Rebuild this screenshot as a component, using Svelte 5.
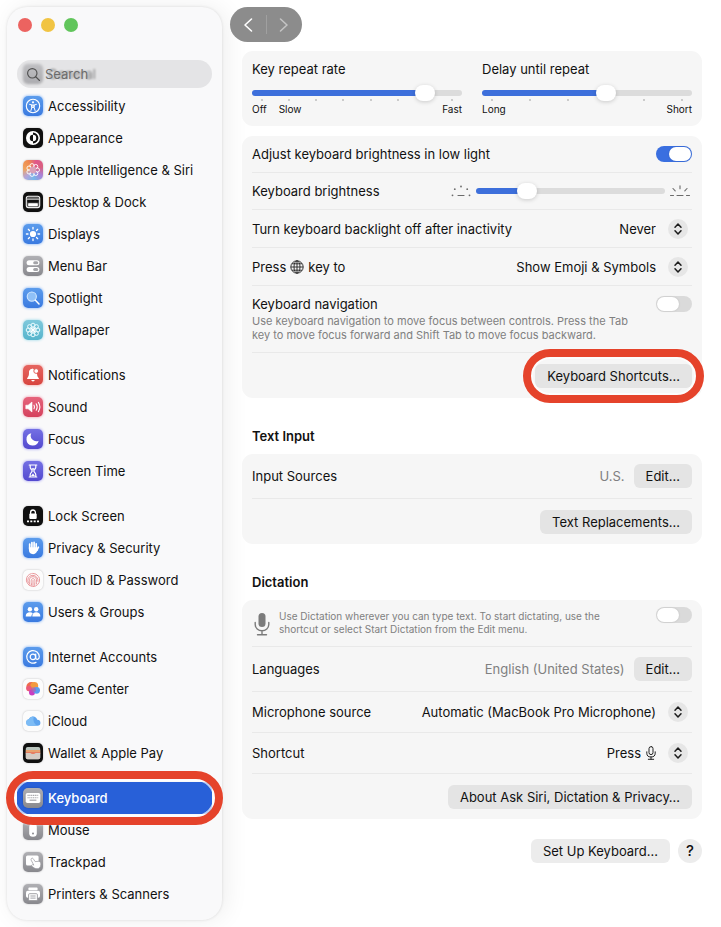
<script>
  const white = 'fill="none" stroke="#fff" stroke-linecap="round" stroke-linejoin="round"';

  const ring = (n, cx, cy, dist, r, attrs) =>
    Array.from({ length: n }, (_, i) => {
      const a = (i / n) * Math.PI * 2;
      return `<circle cx="${cx + Math.cos(a) * dist}" cy="${cy + Math.sin(a) * dist}" r="${r}" ${attrs}/>`;
    }).join('');

  const rays = (n, from, to, attrs) =>
    Array.from({ length: n }, (_, i) => {
      const a = (i / n) * Math.PI * 2;
      const c = Math.cos(a), s = Math.sin(a);
      return `<line x1="${10 + c * from}" y1="${10 + s * from}" x2="${10 + c * to}" y2="${10 + s * to}" ${attrs}/>`;
    }).join('');

  const groups = [
    [
      { name: 'Accessibility', tone: 'blue', art: `<circle cx="10" cy="10" r="6.7" ${white} stroke-width="1.1"/><circle cx="10" cy="6.3" r="1.1" fill="#fff"/><path d="M6.6 8.4 9 9v2.2l-1.1 3.3M13.4 8.4 11 9v2.2l1.1 3.3M9 9h2v2.4H9z" ${white} stroke-width="1"/>` },
      { name: 'Appearance', tone: 'black', art: `<circle cx="10" cy="10" r="6.2" ${white} stroke-width="1.6"/><path d="M10 3.8a6.2 6.2 0 0 0 0 12.4v-3a3.2 3.2 0 0 1 0-6.4z" fill="#fff"/><path d="M10 6.8a3.2 3.2 0 0 1 0 6.4z" fill="#fff"/>` },
      { name: 'Apple Intelligence & Siri', tone: 'siri', art: ring(7, 10, 10, 4.4, 2.1, 'fill="none" stroke="#fff" stroke-width=".9"') + '<circle cx="10" cy="10" r="3.4" fill="#d9a0b8"/>' },
      { name: 'Desktop & Dock', tone: 'black', art: `<rect x="3.3" y="4.2" width="13.4" height="11.4" rx="2" fill="#555" stroke="#eee" stroke-width="1.1"/><path d="M4 7.2h12" stroke="#ddd" stroke-width=".8"/><rect x="5.2" y="11.2" width="9.6" height="3" rx=".6" fill="#fff"/><rect x="4.4" y="8" width="11.2" height="2.6" fill="#111"/>` },
      { name: 'Displays', tone: 'blue', art: `<circle cx="10" cy="10" r="3.1" fill="#fff"/>${rays(8, 5, 6.6, 'stroke="#fff" stroke-width="1.3" stroke-linecap="round"')}` },
      { name: 'Menu Bar', tone: 'gray', art: `<rect x="3.6" y="4.2" width="12.8" height="5" rx="2.5" fill="#fff"/><rect x="10.2" y="5.2" width="5" height="3" rx="1.5" fill="#a4a4a8"/><rect x="3.6" y="10.9" width="12.8" height="5" rx="2.5" fill="#fff"/><rect x="10.2" y="11.9" width="5" height="3" rx="1.5" fill="#a4a4a8"/>` },
      { name: 'Spotlight', tone: 'blue', art: `<circle cx="8.8" cy="8.6" r="4.6" fill="#8fc0f7" stroke="#cfe6ff" stroke-width="1.1"/><path d="m12.4 12.2 3.6 3.7" ${white} stroke-width="1.5"/>` },
      { name: 'Wallpaper', tone: 'teal', art: `${ring(8, 10, 10, 4.8, 2, 'fill="none" stroke="#e9fbff" stroke-width="1"')}${rays(8, 1.2, 3.2, 'stroke="#fff" stroke-width="1" stroke-linecap="round"')}<circle cx="10" cy="10" r="1.6" fill="#fff"/>` }
    ],
    [
      { name: 'Notifications', tone: 'red', art: `<path d="M10 3.8c-2.7 0-4 1.9-4 4.3 0 2.9-.7 3.7-1.7 4.8-.4.5-.2 1 .4 1h10.6c.6 0 .8-.5.4-1-.9-1-1.5-1.8-1.6-3.7" fill="#fff"/><path d="M6 8c0-3 1.600-4.200 4-4.200l4 5.500v4H6z" fill="#fff"/><path d="M8.300 15h3.400a1.700 1.500 0 0 1-3.400 0z" fill="#fff"/><circle cx="13.200" cy="6" r="2.400" fill="#fff" stroke="#de524c" stroke-width=".9"/>` },
      { name: 'Sound', tone: 'rose', art: `<path d="M2.800 8.200h2.300L9 5v10l-3.900-3.200H2.800z" fill="#fff" stroke="#fff" stroke-width=".6" stroke-linejoin="round"/><path d="M11 8.200q1 1.800 0 3.600M13.200 6.800q2 3.200 0 6.400M15.400 5.400q3 4.600 0 9.200" ${white} stroke-width="1.100"/>` },
      { name: 'Focus', tone: 'indigo', art: '<path d="M8.300 4.200a5.600 5.600 0 0 0 7.400 7.500A6.200 6.200 0 1 1 8.300 4.200z" fill="#fff"/>' },
      { name: 'Screen Time', tone: 'indigo', art: `<path d="M6.200 4h7.600M6.200 16h7.600M7.200 4.400v1.800c0 1.900 2 2.700 2 3.800s-2 1.900-2 3.800v1.800M12.800 4.400v1.800c0 1.900-2 2.700-2 3.800s2 1.900 2 3.800v1.800" ${white} stroke-width="1.200"/><path d="M8.200 7.200h3.600L10 9.500zM7.800 15.200 10 12.500l2.200 2.700z" fill="#fff"/>` }
    ],
    [
      { name: 'Lock Screen', tone: 'black', art: `<path d="M7.600 8V6.400a2.400 2.400 0 0 1 4.800 0V8" ${white} stroke-width="1.300"/><rect x="6.300" y="7.400" width="7.400" height="5.600" rx="1" fill="#fff"/><path d="M4 15.400h2M7.300 15.400h2M10.700 15.400h2M14 15.400h2" stroke="#fff" stroke-width="1.900"/>` },
      { name: 'Privacy & Security', tone: 'blue', art: `<path d="M6.700 10.800V6.200M8.900 9.500V4.600M11.100 9.500V4.400M13.200 10V5.800M14 12.200l1.400-3" ${white} stroke-width="1.700"/><path d="M5.900 9.300H14l.8 2.300c-.8 2.700-2 4.700-4.600 4.700-2.900 0-4.300-1.900-4.300-4.700z" fill="#fff"/>` },
      { name: 'Touch ID & Password', tone: 'paper', art: `<g fill="none" stroke="#e78d92" stroke-width=".9" stroke-linecap="round"><circle cx="10" cy="10" r="6.600" stroke-dasharray="10 1 7 1"/><path d="M5.200 12.800a5.200 5.200 0 1 1 9.800-1.500M6.800 14.400c-1.600-5.200.3-7.700 3.200-7.700 3.400 0 4 3 3.400 7.200M8.700 15.300C7.600 11 8.200 8.600 10 8.600c2.200 0 2.200 3 1.500 6.700M10 10.500v5"/></g>` },
      { name: 'Users & Groups', tone: 'blue', art: `<circle cx="6.900" cy="7.300" r="2.200" fill="#fff"/><circle cx="13.200" cy="7.300" r="2.200" fill="#fff"/><path d="M2.700 14.500c0-2.800 1.700-4.200 4.200-4.200 1.200 0 2.200.4 2.900 1-.9.800-1.400 1.900-1.500 3.200zM9.300 14.500c0-2.800 1.500-4.200 3.900-4.200s4.200 1.400 4.200 4.200z" fill="#fff"/>` }
    ],
    [
      { name: 'Internet Accounts', tone: 'blue', art: `<circle cx="9.900" cy="9.900" r="2.700" ${white} stroke-width="1.200"/><path d="M12.700 7.200v3.600c0 2.400 3.600 2 3.600-1A6.300 6.300 0 1 0 13 15.400" ${white} stroke-width="1.200"/>` },
      { name: 'Game Center', tone: 'paper', art: '<circle cx="8.300" cy="8" r="5" fill="#ee6a4d"/><circle cx="11.300" cy="6.800" r="3.900" fill="#f39a3f"/><circle cx="6" cy="9.500" r="2.800" fill="#ec5a78"/><circle cx="9" cy="13.600" r="3" fill="#c93ec2"/><circle cx="13.600" cy="11.300" r="3.400" fill="#5a9df0"/><circle cx="10.400" cy="10.800" r="2.500" fill="#b060b0" opacity=".7"/>' },
      { name: 'iCloud', tone: 'paper', art: '<path d="M6.200 14.800a3.300 3.300 0 0 1-.5-6.500 4.600 4.600 0 0 1 8.600.5 3 3 0 0 1 .2 6z" fill="#5ea4ee"/><path d="M6.200 14.800a3.300 3.300 0 0 1-.5-6.500 4.600 4.600 0 0 1 5-2.600c-.9 4 .5 7.500 3.800 9.100z" fill="#7dbcf5"/>' },
      { name: 'Wallet & Apple Pay', tone: 'black', art: '<rect x="2.800" y="4" width="14.400" height="12.300" rx="1.800" fill="#b9c4bd"/><path d="M2.800 7h14.400v2.500H2.800z" fill="#e9a36f"/><path d="M2.800 9h14.400v2H2.800z" fill="#e77f62"/><path d="M2.800 10h4.700c.6 1.500 4.400 1.500 5 0h4.700v4.500a1.800 1.800 0 0 1-1.800 1.800H4.600a1.800 1.800 0 0 1-1.800-1.800z" fill="#d5cdc5"/>' }
    ],
    [
      { name: 'Keyboard', tone: 'gray', current: true, art: '<rect x="2.700" y="5" width="14.600" height="10" rx="1.700" fill="#fff"/><path d="M4.500 7.400h11M4.500 9.700h11" stroke="#a6a6aa" stroke-width="1.100" stroke-dasharray="1.200 .6"/><path d="M6.600 12.200h6.800" stroke="#a6a6aa" stroke-width="1.200"/>' },
      { name: 'Mouse', tone: 'gray', art: '<rect x="6.200" y="3.400" width="7.600" height="13.400" rx="3.600" fill="#fff"/><circle cx="10" cy="13.400" r="1" fill="#8b8b90"/>' },
      { name: 'Trackpad', tone: 'gray', art: '<rect x="3" y="3.600" width="12.600" height="9.800" rx="1.500" fill="#fff"/><path d="M8.300 6.600c.8-.9 1.700-.4 2.200.5l1.600 2.500 3.800-.3c1.500.2 1.900 1.700 1.900 3.200 0 2.500-1.400 4.200-3.700 4.200-2 0-3.300-.9-5.300-2.500-.7-.8.100-1.800 1-1.500l1 .4-2.600-4.900c-.3-.6-.2-1.200.1-1.600z" fill="#fff" stroke="#98989d" stroke-width=".7"/>' },
      { name: 'Printers & Scanners', tone: 'gray', art: '<rect x="5.400" y="3.600" width="9.200" height="2.600" rx=".8" fill="#fff"/><rect x="3" y="6.800" width="14" height="7" rx="1.700" fill="#fff"/><rect x="5.600" y="9.700" width="8.800" height="6.900" rx="1" fill="#fff" stroke="#98989d" stroke-width=".9"/><path d="M7.400 12h5.200M7.400 14.100h5.200" stroke="#98989d" stroke-width=".9"/>' }
    ]
  ];

  let rate = $state(6);
  let delay = $state(3);
  let brightness = $state(24);
  let lowLight = $state(true);
  let navigation = $state(false);
  let dictation = $state(false);
</script>

{#snippet row(item)}
  <a href="#pane" class="item" class:current={item.current} aria-current={item.current ? 'page' : undefined}>
    <span class="tile {item.tone}"><svg viewBox="0 0 20 20" aria-hidden="true">{@html item.art}</svg></span>
    <span>{item.name}</span>
  </a>
{/snippet}

{#snippet chevrons()}
  <span class="chevrons">
    <svg viewBox="0 0 20 20" aria-hidden="true"><path d="m7 8.200 3-3.200 3 3.200M7 11.800l3 3.200 3-3.200" fill="none" stroke="#1c1c1c" stroke-width="1.500" stroke-linecap="round" stroke-linejoin="round" /></svg>
  </span>
{/snippet}

<div class="window">
  <aside class="sidebar">
    <div class="lights">
      <button class="close" aria-label="Close"></button>
      <button class="minimize" aria-label="Minimize"></button>
      <button class="zoom" aria-label="Zoom"></button>
    </div>

    <div class="searcharea">
      <div class="under" aria-hidden="true"><span class="tile gray"></span><span>General</span></div>
      <label class="search">
        <svg viewBox="0 0 16 16" aria-hidden="true"><circle cx="6.700" cy="6.700" r="5" /><path d="m10.400 10.400 4 4" /></svg>
        <input type="search" aria-label="Search" placeholder="Search" />
      </label>
    </div>

    <nav>
      {#each groups as group}
        <div class="group">
          {#each group as item}
            {#if item.current}
              <div class="marked wide">{@render row(item)}</div>
            {:else}
              {@render row(item)}
            {/if}
          {/each}
        </div>
      {/each}
    </nav>
  </aside>

  <main id="pane">
    <div class="history">
      <button aria-label="Back"><svg viewBox="0 0 12 16"><path d="M9.500 2 3 8l6.500 6" /></svg></button>
      <button aria-label="Forward" disabled><svg viewBox="0 0 12 16"><path d="M2.500 2 9 8l-6.500 6" /></svg></button>
    </div>

    <section class="card pair">
      <div class="rate">
        <label for="rate">Key repeat rate</label>
        <input id="rate" type="range" min="0" max="7" bind:value={rate} style:--fill="{(rate / 7) * 100}%" />
        <div class="ticks">{#each Array(8) as _}<i></i>{/each}</div>
        <div class="scale"><span>Off</span><span>Slow</span><span class="end">Fast</span></div>
      </div>
      <div class="rate">
        <label for="delay">Delay until repeat</label>
        <input id="delay" type="range" min="0" max="5" bind:value={delay} style:--fill="{(delay / 5) * 100}%" />
        <div class="ticks">{#each Array(6) as _}<i></i>{/each}</div>
        <div class="scale"><span>Long</span><span class="end">Short</span></div>
      </div>
    </section>

    <section class="card">
      <div class="row">
        <label for="lowlight">Adjust keyboard brightness in low light</label>
        <input id="lowlight" class="switch" type="checkbox" bind:checked={lowLight} />
      </div>
      <div class="row">
        <label for="brightness">Keyboard brightness</label>
        <div class="dimmer">
          <svg viewBox="0 0 20 12" aria-hidden="true"><path d="M7 10.500h6" /><g fill="#6b6b6b" stroke="none"><circle cx="1.500" cy="10.300" r=".9" /><circle cx="18.500" cy="10.300" r=".9" /><circle cx="3.800" cy="4.200" r=".9" /><circle cx="16.200" cy="4.200" r=".9" /><circle cx="10" cy="1.500" r=".9" /></g></svg>
          <input id="brightness" type="range" min="0" max="100" bind:value={brightness} style:--fill="{brightness}%" />
          <svg viewBox="0 0 20 12" aria-hidden="true"><path d="M.5 10.500h3M7 10.500h6M16.500 10.500h3M10 .8v3M3 3.500l2.200 2.400M17 3.500l-2.200 2.400" /></svg>
        </div>
      </div>
      <div class="row tall">
        <label for="backlight">Turn keyboard backlight off after inactivity</label>
        <div class="picker"><select id="backlight"><option>Never</option></select>{@render chevrons()}</div>
      </div>
      <div class="row tall">
        <label for="globe" class="inline">Press
          <svg class="globe" viewBox="0 0 14 14" aria-label="Globe"><circle cx="7" cy="7" r="6.200" /><ellipse cx="7" cy="7" rx="3" ry="6.200" /><path d="M7 .8v12.400M.8 7h12.400M2 3.800h10M2 10.200h10" /></svg>
          key to</label>
        <div class="picker"><select id="globe"><option>Show Emoji &amp; Symbols</option></select>{@render chevrons()}</div>
      </div>
      <div class="row top navrow">
        <div>
          <label for="navigation">Keyboard navigation</label>
          <p>Use keyboard navigation to move focus between controls. Press the Tab key to move focus forward and Shift Tab to move focus backward.</p>
        </div>
        <input id="navigation" class="switch" type="checkbox" bind:checked={navigation} />
      </div>
      <div class="row action">
        <div class="marked"><button class="push">Keyboard Shortcuts…</button></div>
      </div>
    </section>

    <h2>Text Input</h2>
    <section class="card">
      <div class="row button-row">
        <span>Input Sources</span>
        <div class="value"><span>U.S.</span><button class="push">Edit…</button></div>
      </div>
      <div class="row action"><button class="push">Text Replacements…</button></div>
    </section>

    <h2>Dictation</h2>
    <section class="card">
      <div class="row top dictation">
        <svg class="mic" viewBox="0 0 16 24" aria-hidden="true"><rect x="4.500" y="1" width="7" height="14" rx="3.500" fill="#7b7b7b" /><path d="M1.200 10.500v2a6.800 6.300 0 0 0 13.600 0v-2M8 19v3.500M3.500 22.700h9" fill="none" stroke="#7b7b7b" stroke-width="1.400" stroke-linecap="round" /></svg>
        <label for="dictation">Use Dictation wherever you can type text. To start dictating, use the shortcut or select Start Dictation from the Edit menu.</label>
        <input id="dictation" class="switch" type="checkbox" bind:checked={dictation} />
      </div>
      <div class="row button-row">
        <span>Languages</span>
        <div class="value"><span>English (United States)</span><button class="push">Edit…</button></div>
      </div>
      <div class="row mid">
        <label for="source">Microphone source</label>
        <div class="picker"><select id="source"><option>Automatic (MacBook Pro Microphone)</option></select>{@render chevrons()}</div>
      </div>
      <div class="row mid">
        <label for="shortcut">Shortcut</label>
        <div class="picker">
          <select id="shortcut"><option>Press</option></select>
          <svg class="smallmic" viewBox="0 0 10 14" aria-label="Microphone"><rect x="3" y=".6" width="4" height="8" rx="2" /><path d="M.8 5.800v1.400a4.200 3.800 0 0 0 8.400 0V5.800M5 11v2.300M2.300 13.300h5.400" /></svg>
          {@render chevrons()}
        </div>
      </div>
      <div class="row action"><button class="push">About Ask Siri, Dictation &amp; Privacy…</button></div>
    </section>

    <footer>
      <button class="push">Set Up Keyboard…</button>
      <button class="help" aria-label="Help">?</button>
    </footer>
  </main>
</div>

<style>
  :global(body) { background: #fff; }
  * { box-sizing: border-box; }
  .window {
    display: flex;
    font: 13px/16px Inter, "Liberation Sans", sans-serif;
    color: #111;
    overflow: hidden;
    padding-left: 7px;
  }
  button, input, select { font: inherit; color: inherit; margin: 0; padding: 0; border: 0; }

  .sidebar {
    flex: 0 0 215px;
    min-width: 0;
    margin: 7px 0;
    padding: 11px 10px 10px;
    border-radius: 20px;
    background: #f9f9fa;
    box-shadow: 0 0 3px rgba(0, 0, 0, .12), 4px 0 24px rgba(0, 0, 0, .07);
  }
  .lights { display: flex; gap: 9px; padding: 0 1px; }
  .lights button { width: 14px; height: 14px; border-radius: 50%; }
  .close { background: #ec6360; }
  .minimize { background: #f1c443; }
  .zoom { background: #61c55b; }

  .searcharea { display: grid; grid-template-columns: minmax(0, 1fr); margin: 28px 0 2px; }
  .searcharea > * { grid-area: 1 / 1; }
  .under { display: flex; align-items: center; gap: 5px; padding: 0 6px; color: #333; filter: blur(1px); }
  .search {
    position: relative;
    display: flex;
    align-items: center;
    gap: 4px;
    height: 28px;
    padding: 0 9px;
    border-radius: 14px;
    background: rgba(208, 208, 209, .5);
  }
  .search svg { width: 15px; height: 15px; flex: none; fill: none; stroke: #505050; stroke-width: 1.2; stroke-linecap: round; }
  .search input { flex: 1; min-width: 0; background: none; outline: none; appearance: none; }
  .search input::placeholder { color: #6c6c6c; opacity: 1; }

  .group + .group { margin-top: 13px; }
  .item {
    display: flex;
    align-items: center;
    gap: 5px;
    height: 32px;
    padding: 0 6px;
    border-radius: 8px;
    color: #111;
    text-decoration: none;
    white-space: nowrap;
  }
  .item.current { background: #2860d8; color: #fff; font-weight: 500; }
  .tile { width: 20px; height: 20px; flex: none; border-radius: 5px; box-shadow: 0 0 2px rgba(0, 0, 0, .25); }
  .tile svg { display: block; width: 20px; height: 20px; }
  .blue { background: linear-gradient(#5c9cec, #3a7ae0); box-shadow: 0 0 3px #6aa5f5; }
  .black { background: #101010; }
  .gray { background: linear-gradient(#b0b0b4, #88888d); }
  .teal { background: linear-gradient(#7fc9dc, #55b4cc); box-shadow: 0 0 3px #8ad4e4; }
  .red { background: linear-gradient(#e66560, #d8453f); box-shadow: 0 0 3px #f08a85; }
  .rose { background: linear-gradient(#e6647c, #d5405c); box-shadow: 0 0 3px #f08a9d; }
  .indigo { background: linear-gradient(#7470e4, #5349cf); box-shadow: 0 0 3px #8d88f0; }
  .paper { background: #fcfcfc; }
  .siri { background: conic-gradient(from 20deg, #e0568a, #d9607f, #a983d8, #75b7ea, #b3a6dc, #f0a55f, #ee8b4f, #e0568a); }

  .marked { position: relative; }
  .marked::after {
    content: "";
    position: absolute;
    z-index: 2;
    inset: -15px -12px;
    border: 8px solid #e5432b;
    border-radius: 27px;
    box-shadow: 0 0 2px #fff, inset 0 0 0 2px #ffffffb0;
    pointer-events: none;
  }
  .marked.wide::after { inset: -11px; }

  main { flex: 1; min-width: 0; padding: 7px 19px 58px 20px; }
  .history {
    display: flex;
    width: 72px;
    height: 35px;
    margin: 0 0 9px -12px;
    padding: 8px 0;
    border-radius: 18px;
    background: #8c8c8c;
  }
  .history button { flex: 1; display: grid; place-items: center; background: none; }
  .history button + button { border-left: 1px solid #a0a0a0; }
  .history svg { width: 12px; height: 16px; fill: none; stroke: #fff; stroke-width: 1.6; stroke-linecap: round; stroke-linejoin: round; }
  .history button:disabled svg { stroke: #c4c4c4; }

  .card { padding: 0 10px; border-radius: 11px; background: #f6f6f6; }
  .card + .card { margin-top: 10px; }
  .pair { display: grid; grid-template-columns: 1fr 1fr; gap: 20px; padding: 10px 10px 9px; }
  .rate { display: flex; flex-direction: column; }
  .rate label { margin-bottom: 8px; }
  .ticks { display: flex; justify-content: space-between; padding: 0 9px; margin-top: -2px; }
  .ticks i { width: 2px; height: 2px; border-radius: 50%; background: #bdbdbd; }
  .rate input { position: relative; }
  .scale { display: flex; gap: 12px; margin-top: 1px; font-size: 10px; line-height: 15px; }
  .scale .end { margin-left: auto; }

  input[type="range"] { appearance: none; display: block; width: 100%; height: 16px; background: none; }
  input[type="range"]::-webkit-slider-runnable-track {
    height: 6px;
    border-radius: 3px;
    background: linear-gradient(to right, #3d6fdb var(--fill), #dcdcdc var(--fill));
  }
  input[type="range"]::-webkit-slider-thumb {
    appearance: none;
    width: 20px;
    height: 16px;
    margin-top: -5px;
    border-radius: 8px;
    background: #fff;
    box-shadow: 0 1px 4px rgba(0, 0, 0, .18);
  }

  .row { display: flex; align-items: center; justify-content: space-between; min-height: 37px; }
  .row:not(:last-child) { border-bottom: 1px solid #e9e9e9; }
  .tall { min-height: 38px; }
  .mid { min-height: 41px; }
  .action, .button-row { min-height: 45px; }
  .action { justify-content: flex-end; }
  .top { align-items: flex-start; }
  .navrow { min-height: 67px; padding: 10px 0 8px; }
  p { margin: 2px 0 0; padding-right: 16px; font-size: 11px; line-height: 14px; color: #808080; }
  .dictation { min-height: 47px; padding: 7px 0; gap: 7px; justify-content: flex-start; }
  .dictation label { flex: 1; padding: 3px 30px 0 0; font-size: 10px; line-height: 13px; color: #808080; }
  .mic { width: 20px; height: 24px; flex: none; margin-top: 5px; }

  .switch {
    appearance: none;
    flex: none;
    width: 36px;
    height: 16px;
    padding: 1px;
    border-radius: 8px;
    background: #dadada;
  }
  .switch::before {
    content: "";
    display: block;
    width: 22px;
    height: 14px;
    border-radius: 7px;
    background: #fff;
    box-shadow: 0 0 2px rgba(0, 0, 0, .15);
  }
  .switch:checked { background: #3a6fe0; }
  .switch:checked::before { margin-left: 12px; }

  .dimmer { display: flex; align-items: center; gap: 5px; width: 241px; padding-right: 2px; }
  .dimmer input { flex: 1; min-width: 0; }
  .dimmer svg { width: 20px; height: 12px; flex: none; fill: none; stroke: #6b6b6b; stroke-width: 1.1; stroke-linecap: round; }

  .inline { display: flex; align-items: center; gap: 4px; }
  .globe { width: 14px; height: 14px; fill: none; stroke: #222; stroke-width: .9; }
  .picker { display: flex; align-items: center; padding-right: 4px; }
  .picker select { appearance: none; background: none; outline: none; text-align: right; }
  .smallmic { width: 10px; height: 14px; margin-left: 5px; fill: none; stroke: #222; stroke-width: 1; stroke-linecap: round; }
  .chevrons { width: 20px; height: 20px; margin-left: 12px; border-radius: 50%; background: #e6e6e6; pointer-events: none; }
  .chevrons svg { display: block; width: 20px; height: 20px; }

  .push { height: 24px; padding: 0 12px; border-radius: 6px; background: #e4e4e4; white-space: nowrap; }
  .value { display: flex; align-items: center; gap: 9px; color: #808080; }
  .value button { color: #111; }
  h2 { margin: 30px 10px 10px; font-size: 13px; line-height: 16px; font-weight: 600; }
  footer { display: flex; justify-content: flex-end; gap: 8px; margin-top: 20px; }
  footer .push { background: #ececec; }
  .help { width: 24px; height: 24px; border-radius: 50%; background: #ececec; font-size: 15px; font-weight: 500; }
</style>
